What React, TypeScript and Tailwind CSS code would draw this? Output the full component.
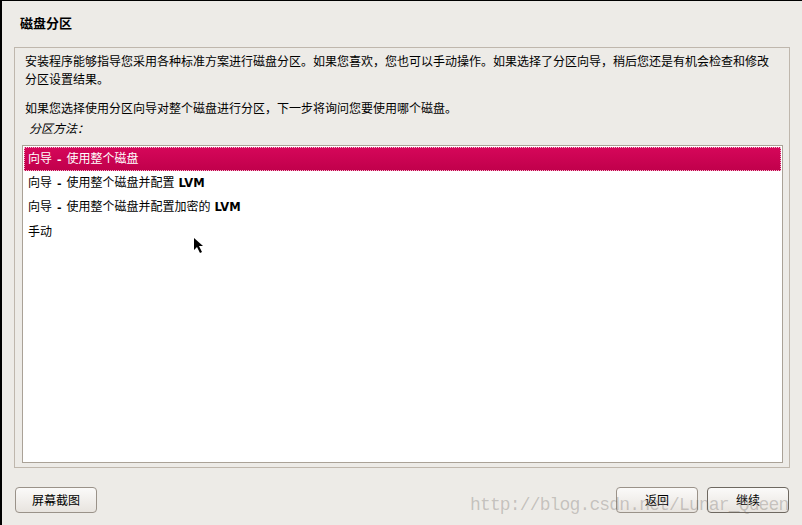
import React from "react";

const cjk = { fontFamily: '"Noto Sans CJK SC", "DejaVu Sans", sans-serif' };
const latinBold = { fontFamily: '"DejaVu Sans", sans-serif' };

function Row({ children, selected }: { children: React.ReactNode; selected?: boolean }) {
  return (
    <div
      className={
        "h-[24px] flex items-center pl-[4px] text-[12px] " +
        (selected
          ? "text-white bg-gradient-to-b from-[#d6075a] to-[#c0004b] outline outline-1 outline-dotted outline-[#f4b8cc] -outline-offset-1"
          : "text-black")
      }
    >
      <span className="leading-[16px] whitespace-nowrap">{children}</span>
    </div>
  );
}

function Dash() {
  return (
    <span className="font-bold text-[11px] mx-[5px]" style={latinBold}>
      -
    </span>
  );
}

function LVM() {
  return (
    <span className="font-bold text-[11.5px] ml-[4px]" style={latinBold}>
      LVM
    </span>
  );
}

function Btn({ children, def, className }: { children: React.ReactNode; def?: boolean; className?: string }) {
  return (
    <div
      className={
        "h-[26px] w-[82px] rounded-[4px] border flex items-center justify-center text-[12px] text-black bg-gradient-to-b from-[#fbfaf9] to-[#e8e4df] " +
        (def ? "border-[#6e6860]" : "border-[#9a9289]") +
        " " +
        (className ?? "")
      }
    >
      {children}
    </div>
  );
}

export default function App() {
  return (
    <div className="relative w-[802px] h-[525px] bg-[#edebe7] border-l-2 border-t border-black overflow-hidden" style={cjk}>
      <div className="h-[46px] pl-[18px] pt-[14px] text-[13px] font-bold text-black leading-[16px]">磁盘分区</div>
      <div className="ml-[12px] w-[776px] h-[421px] border border-[#bfb7ad] pt-[4px] pl-[7px] pr-[6px] pb-[4px] flex flex-col">
        <div className="pl-[3px] text-[12px] leading-[18px] text-black">
          <p className="w-[748px]">
            安装程序能够指导您采用各种标准方案进行磁盘分区。如果您喜欢，您也可以手动操作。如果选择了分区向导，稍后您还是有机会检查和修改分区设置结果。
          </p>
          <p className="mt-[11px]">如果您选择使用分区向导对整个磁盘进行分区，下一步将询问您要使用哪个磁盘。</p>
          <p className="mt-[2px] pl-[4px] italic">分区方法：</p>
        </div>
        <div className="mt-[8px] flex-1 bg-white border border-[#aaa297] p-[1px]">
          <Row selected>
            向导<Dash />使用整个磁盘
          </Row>
          <Row>
            向导<Dash />使用整个磁盘并配置<LVM />
          </Row>
          <Row>
            向导<Dash />使用整个磁盘并配置加密的<LVM />
          </Row>
          <Row>手动</Row>
        </div>
      </div>
      <div className="mt-[19px] flex items-center pl-[13px] pr-[13px]">
        <Btn>屏幕截图</Btn>
        <div className="flex-1" />
        <Btn>返回</Btn>
        <Btn def className="ml-[9px]">
          继续
        </Btn>
      </div>
      <svg className="absolute left-[191px] top-[236px]" width="12" height="18" viewBox="0 0 12 18">
        <polygon points="1,1 1,13 4,10 7,16 9,15 6,9 10,9" fill="#000" />
      </svg>
      <div
        className="absolute left-[468px] top-[493px] text-[18px] leading-[22px] tracking-[-0.85px] text-[rgba(110,105,100,0.32)] whitespace-nowrap pointer-events-none"
        style={{ fontFamily: '"Liberation Mono", monospace' }}
      >
        http://blog.csdn.net/Lunar_Queen
      </div>
    </div>
  );
}
